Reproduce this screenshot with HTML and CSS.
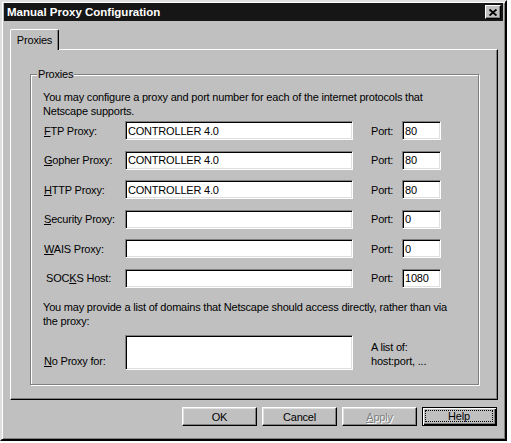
FILE: index.html
```html
<!DOCTYPE html>
<html lang="en">

<head>
    <meta charset="UTF-8">
    <title>Manual Proxy Configuration</title>
    <link rel="stylesheet" href="styles.css">
</head>

<body>

    <div class="window">
        <!-- Title bar -->
        <div class="titlebar">
            <span class="title">Manual Proxy Configuration</span>
            <span class="close-btn">
                <svg width="8" height="7" viewBox="0 0 8 7">
                    <path d="M0.5 0.5 L7.5 6.5 M7.5 0.5 L0.5 6.5" stroke="#000" stroke-width="1.9" fill="none" />
                </svg>
            </span>
        </div>

        <!-- Tabs -->
        <div class="tabs">
            <div class="tab">Proxies</div>
        </div>

        <div class="panel">
            <fieldset class="group">
                <legend>Proxies</legend>
                <p class="intro">You may configure a proxy and port number for each of the internet protocols that<br>
                    Netscape supports.</p>

                <div class="rows">
                    <div class="row">
                        <label class="name"><u>F</u>TP Proxy:</label>
                        <input class="host" type="text" value="CONTROLLER 4.0">
                        <label class="port-label">Port:</label>
                        <input class="port" type="text" value="80">
                    </div>
                    <div class="row">
                        <label class="name"><u>G</u>opher Proxy:</label>
                        <input class="host" type="text" value="CONTROLLER 4.0">
                        <label class="port-label">Port:</label>
                        <input class="port" type="text" value="80">
                    </div>
                    <div class="row">
                        <label class="name"><u>H</u>TTP Proxy:</label>
                        <input class="host" type="text" value="CONTROLLER 4.0">
                        <label class="port-label">Port:</label>
                        <input class="port" type="text" value="80">
                    </div>
                    <div class="row">
                        <label class="name"><u>S</u>ecurity Proxy:</label>
                        <input class="host" type="text" value="">
                        <label class="port-label">Port:</label>
                        <input class="port" type="text" value="0">
                    </div>
                    <div class="row">
                        <label class="name"><u>W</u>AIS Proxy:</label>
                        <input class="host" type="text" value="">
                        <label class="port-label">Port:</label>
                        <input class="port" type="text" value="0">
                    </div>
                    <div class="row">
                        <label class="name socks">SOC<u>K</u>S Host:</label>
                        <input class="host" type="text" value="">
                        <label class="port-label">Port:</label>
                        <input class="port" type="text" value="1080">
                    </div>
                </div>

                <p class="direct">You may provide a list of domains that Netscape should access directly, rather than via<br>
                    the proxy:</p>

                <div class="no-proxy">
                    <label class="name"><u>N</u>o Proxy for:</label>
                    <textarea class="host"></textarea>
                    <div class="hint">A list of:<br>host:port, ...</div>
                </div>
            </fieldset>
        </div>

        <!-- Dialog buttons -->
        <div class="buttons">
            <button class="btn">OK</button>
            <button class="btn">Cancel</button>
            <button class="btn" disabled><u>A</u>pply</button>
            <button class="btn default"><span class="focus">Help</span></button>
        </div>
    </div>

</body>

</html>
```

FILE: styles.css
```css
body {
    margin: 0;
    background: #fff;
    font-family: "Liberation Sans", Arial, sans-serif;
    font-size: 11px;
    letter-spacing: -0.2px;
    color: #000;
}

.window {
    width: 507px;
    height: 441px;
    box-sizing: border-box;
    background: #c0c0c0;
    border: 2px solid;
    border-color: #dfdfdf #000 #000 #dfdfdf;
    box-shadow: inset 1px 1px #fff, inset -1px -1px #808080;
    padding: 1px 2px 2px 2px;
}

.titlebar {
    height: 18px;
    background: #161616;
    display: flex;
    align-items: center;
    justify-content: space-between;
    padding-left: 3px;
}

.title {
    color: #fff;
    font-weight: bold;
    font-size: 11.5px;
    letter-spacing: 0;
}

.close-btn {
    width: 16px;
    height: 14px;
    box-sizing: border-box;
    margin-right: 2px;
    background: #c0c0c0;
    border: 1px solid;
    border-color: #fff #000 #000 #fff;
    box-shadow: inset -1px -1px #808080;
    display: flex;
    align-items: center;
    justify-content: center;
}

.tabs {
    display: flex;
    margin: 8px 0 0 6px;
}

.tab {
    position: relative;
    z-index: 1;
    width: 49px;
    height: 21px;
    box-sizing: border-box;
    margin-bottom: -1px;
    background: #c0c0c0;
    border: 1px solid;
    border-bottom: none;
    border-color: #fff #000 #000 #fff;
    border-radius: 2px 2px 0 0;
    box-shadow: inset -1px 0 #808080;
    display: flex;
    align-items: center;
    justify-content: center;
    padding-bottom: 1px;
}

.panel {
    height: 351px;
    box-sizing: border-box;
    margin: 0 5px 0 6px;
    border: 1px solid;
    border-color: #fff #000 #000 #fff;
    box-shadow: inset -1px -1px #808080;
    padding: 17px 0 0 19px;
}

.group {
    width: 449px;
    box-sizing: border-box;
    margin: 0;
    padding: 9px 0 14px 12px;
    border: 1px solid #808080;
    box-shadow: 1px 1px #fff, inset 1px 1px #fff;
}

.group legend {
    margin-left: -6px;
    padding: 0 1px;
    line-height: 14px;
    background: #c0c0c0;
}

p {
    margin: 0;
    line-height: 14px;
}

.rows {
    display: flex;
    flex-direction: column;
    gap: 10.5px;
    margin-top: 3px;
}

.row {
    display: flex;
    align-items: center;
    height: 19px;
}

.name {
    width: 82px;
    box-sizing: border-box;
    padding-left: 1px;
    flex-shrink: 0;
}

.name.socks {
    padding-left: 3px;
}

input,
textarea {
    font-family: inherit;
    font-size: 11px;
    letter-spacing: -0.2px;
    color: #000;
    background: #fff;
    box-sizing: border-box;
    margin: 0;
    padding: 0 2px;
    border: 1px solid;
    border-color: #808080 #fff #fff #808080;
    box-shadow: inset 1px 1px #000, inset -1px -1px #dfdfdf;
    outline: none;
}

.host {
    width: 228px;
    height: 19px;
}

.port-label {
    width: 31px;
    margin-left: 18px;
}

.port {
    width: 39px;
    height: 19px;
}

.direct {
    margin-top: 12.5px;
}

.no-proxy {
    display: flex;
    align-items: flex-start;
    margin-top: 7px;
}

.no-proxy .name {
    padding-top: 19px;
    line-height: 14px;
}

.no-proxy textarea {
    height: 35px;
    resize: none;
}

.hint {
    margin: 5px 0 0 18px;
    line-height: 14px;
}

.buttons {
    display: flex;
    justify-content: flex-end;
    gap: 5px;
    margin: 7px 6px 0 0;
}

.btn {
    width: 75px;
    height: 19px;
    box-sizing: border-box;
    padding: 0;
    font-family: inherit;
    font-size: 11px;
    letter-spacing: -0.2px;
    color: #000;
    background: #c0c0c0;
    border: 1px solid;
    border-color: #fff #000 #000 #fff;
    box-shadow: inset -1px -1px #808080, inset 1px 1px #dfdfdf;
    cursor: pointer;
}

.btn:disabled {
    color: #808080;
    text-shadow: 1px 1px #fff;
    cursor: default;
}

.btn.default {
    display: flex;
    padding: 2px 3px 3px 2px;
    border-color: #000;
    box-shadow: inset 1px 1px #fff, inset -1px -1px #000, inset -2px -2px #808080;
}

.focus {
    flex: 1;
    border: 1px dotted #000;
    line-height: 9px;
    display: flex;
    align-items: center;
    justify-content: center;
}
```
